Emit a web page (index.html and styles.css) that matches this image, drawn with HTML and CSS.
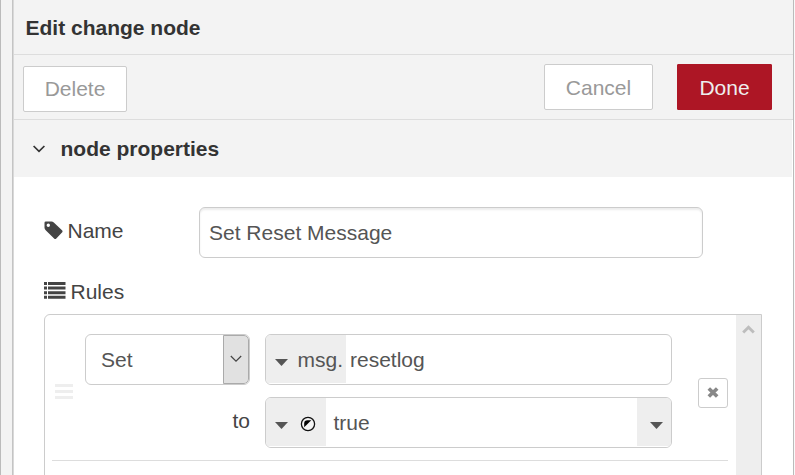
FILE: index.html
```html
<!DOCTYPE html>
<html lang="en">
<head>
<meta charset="utf-8">
<title>Edit change node</title>
<link rel="stylesheet" href="styles.css">
</head>
<body>
<div class="separator"></div>
<main class="tray">
  <header class="tray-header">Edit change node</header>
  <div class="toolbar">
    <button class="btn btn-delete">Delete</button>
    <button class="btn btn-cancel">Cancel</button>
    <button class="btn btn-done">Done</button>
  </div>
  <div class="section">
    <svg class="chevron" width="12" height="8" viewBox="0 0 12 8"><path d="M.6 1 6 6.400 11.400 1" fill="none" stroke="#333" stroke-width="1.700"/></svg>
    <span>node properties</span>
  </div>
  <div class="form">
    <div class="row">
      <label class="name-label">
        <svg width="19" height="19" viewBox="0 0 19 19"><path fill="#444" fill-rule="evenodd" d="M1.800.5H7.500Q8.700.5 9.800 1.500L18 9.300Q19.100 10.400 18 11.500L12.300 17.500Q11.200 18.500 10.100 17.500L1.700 9.300Q.5 8 .5 6.800V1.800Q.5.5 1.800.5ZM4.300 2.500A1.700 1.700 0 1 0 4.300 5.900 1.700 1.700 0 1 0 4.300 2.500Z"/></svg>
        <span>Name</span>
      </label>
      <div class="field name-field">Set Reset Message</div>
    </div>
    <div class="rules-label">
      <svg width="22" height="17" viewBox="0 0 22 17"><path fill="#444" d="M0 0h3v3H0zM4 0h17.500v3H4zM0 4.600h3v3H0zM4 4.600h17.500v3H4zM0 9.200h3v3H0zM4 9.200h17.500v3H4zM0 13.800h3v3H0zM4 13.800h17.500v3H4z"/></svg>
      <span>Rules</span>
    </div>
    <div class="rules">
      <div class="rule">
        <div class="handle"><i></i><i></i><i></i></div>
        <div class="rule-body">
          <div class="select">
            <span class="select-text">Set</span>
            <span class="select-button"><svg width="12" height="8" viewBox="0 0 12 8"><path d="M.8 1 6 6.200 11.200 1" fill="none" stroke="#444" stroke-width="1.200"/></svg></span>
          </div>
          <div class="typed">
            <span class="type type-msg"><i class="caret"></i><span>msg.</span></span>
            <span class="value value-msg">resetlog</span>
          </div>
          <div class="to">to</div>
          <div class="typed">
            <span class="type type-bool"><i class="caret"></i><svg width="16" height="16" viewBox="0 0 16 16"><circle cx="8" cy="8" r="6.600" fill="#f4f4f4" stroke="#111" stroke-width="1.300"/><path d="M4.200 11.300V7.500Q4.200 4.200 7.500 4.200H11.300Z" fill="#000"/></svg></span>
            <span class="value value-bool">true</span>
            <span class="options"><i class="caret"></i></span>
          </div>
        </div>
        <div class="remove"><svg width="12" height="11" viewBox="0 0 12 11"><path d="M1.800 1.500 10.200 9.500M10.200 1.500 1.800 9.500" fill="none" stroke="#888" stroke-width="3.700"/></svg></div>
      </div>
      <div class="scrollbar"><svg width="13" height="10" viewBox="0 0 13 10"><path d="M1.200 8.500 6.500 3.200 11.800 8.500" fill="none" stroke="#bdbdbd" stroke-width="2.900"/></svg></div>
    </div>
  </div>
</main>
</body>
</html>
```

FILE: styles.css
```css
* { box-sizing: border-box; }
body {
  margin: 0;
  height: 475px;
  display: flex;
  overflow: hidden;
  background: #f9f9f9;
  color: #444;
  font: 21px/26px "Liberation Sans", Arial, sans-serif;
}
svg { display: block; flex: none; }
.separator {
  width: 14px;
  flex: none;
  background: #f3f3f3;
  border-left: 1px solid #bbb;
  border-right: 1px solid #d9d9d9;
  box-shadow: inset -1px 0 #c4c4c4;
}
.tray {
  width: 780px;
  flex: none;
  background: #fff;
  border-right: 1px solid #bbb;
}
.tray-header {
  height: 55px;
  padding: 15px 0 0 11.5px;
  background: #f3f3f3;
  border-bottom: 1px solid #ddd;
  color: #333;
  font-weight: bold;
}
.toolbar {
  height: 65px;
  display: flex;
  align-items: flex-start;
  padding: 9px 21px 0 9px;
  background: #f3f3f3;
  border-bottom: 1px solid #ddd;
}
.btn {
  height: 46px;
  padding: 0;
  border: 1px solid #ccc;
  border-radius: 2px;
  background: #fff;
  color: #999;
  font: inherit;
}
.btn-delete { width: 104px; margin-top: 2px; }
.btn-cancel { width: 109px; margin-left: auto; padding-top: 2px; }
.btn-done { width: 95px; margin-left: 24px; padding-top: 2px; background: #ad1625; border-color: #ad1625; border-radius: 1px; color: #eee; }
.section {
  height: 57px;
  margin-right: 1px;
  display: flex;
  align-items: center;
  padding-left: 19px;
  background: #f3f3f3;
  color: #333;
  font-weight: bold;
}
.chevron { margin-right: 15.5px; }
.form { padding: 30px 0 0 30px; }
.row { display: flex; }
.name-label { width: 155px; display: flex; padding-top: 11px; }
.name-label svg { margin: 3px 5px 0 -.5px; }
.field {
  border: 1px solid #ccc;
  border-radius: 6px;
  color: #555;
  background: #fff;
}
.name-field {
  width: 504px;
  height: 51px;
  padding: 12px 0 0 9px;
  box-shadow: inset 0 2px 2px rgba(0,0,0,.075);
}
.rules-label { display: flex; height: 56px; padding-top: 21px; }
.rules-label svg { margin: 3px 5px 0 -.5px; }
.rules {
  width: 718px;
  height: 180px;
  display: flex;
  border: 1px solid #ccc;
  border-radius: 6px 0 0;
}
.rule {
  width: 676px;
  height: 146px;
  margin-left: 7px;
  display: flex;
  border-bottom: 1px solid #ddd;
}
.handle { width: 33px; padding: 69px 0 0 3px; }
.handle i { display: block; width: 18px; height: 3px; margin-bottom: 3px; background: #eee; }
.rule-body {
  display: grid;
  grid-template: 51px 51px / 165px 407px;
  gap: 12px 15px;
  padding-top: 19px;
}
.select, .typed {
  display: flex;
  border: 1px solid #ccc;
  border-radius: 6px;
  overflow: hidden;
  color: #555;
}
.select-text { flex: 1; padding: 12px 0 0 15px; }
.select-button {
  width: 26px;
  display: flex;
  justify-content: center;
  padding-top: 19px;
  border: 1px solid #aaa;
  border-radius: 0 5px 5px 0;
  background: #e1e1e1;
}
.type { display: flex; background: #eee; border-bottom: 1px solid #fff; }
.type-msg { width: 80px; padding: 12px 0 0 9px; }
.type-bool { width: 60px; padding: 12px 0 0 9px; }
.type-msg span { margin-left: 9.5px; }
.type-bool svg { margin: 6px 0 0 12px; }
.caret {
  width: 13px;
  height: 7px;
  flex: none;
  margin-top: 12px;
  background: #555;
  clip-path: polygon(0 0, 100% 0, 50% 100%);
}
.value { flex: 1; padding-top: 12px; }
.value-msg { padding-left: 4px; }
.value-bool { padding-left: 7.5px; }
.options { width: 34px; padding: 12px 0 0 13px; background: #eee; border-bottom: 1px solid #fff; }
.options .caret { display: block; }
.to { padding-top: 11px; text-align: right; }
.remove {
  width: 30px;
  height: 30px;
  margin: 63px 0 0 26px;
  display: flex;
  justify-content: center;
  padding-top: 8px;
  border: 1px solid #ccc;
  border-radius: 3px;
}
.scrollbar { width: 25px; margin-left: auto; padding: 9px 0 0 6px; background: #eee; }
```
